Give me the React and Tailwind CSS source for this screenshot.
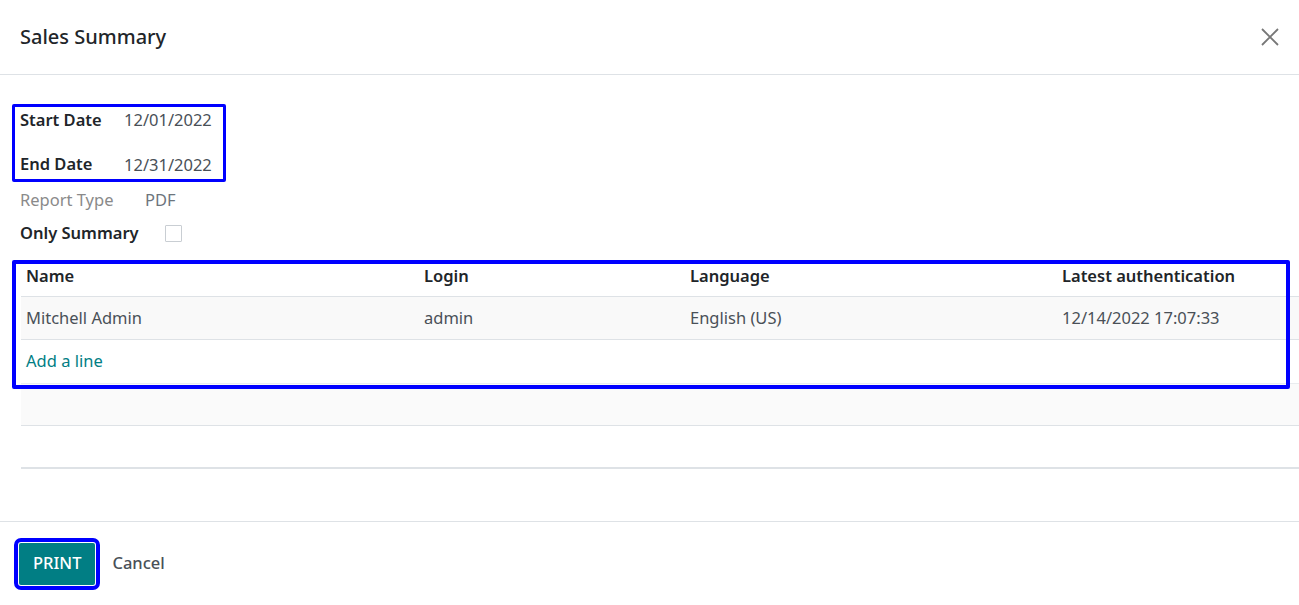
import React from 'react';

const cols = 'grid grid-cols-[397px_266px_372px_1fr]';

const App = () => {
  return (
    <div className="w-[1299px] h-[605px] bg-white flex flex-col text-[16.5px] text-[#212529] overflow-hidden font-['Noto_Sans','Open_Sans',sans-serif]">
      {/* header */}
      <div className="h-[75px] shrink-0 flex items-center justify-between pl-5 pr-[20px] border-b border-[#dee2e6]">
        <h4 className="text-[20px] font-medium">Sales Summary</h4>
        <svg width="20" height="20" viewBox="0 0 20 20" className="text-[#777] mr-[-1px]">
          <path d="M2 2 L18 18 M18 2 L2 18" stroke="currentColor" strokeWidth="1.8" fill="none" />
        </svg>
      </div>

      {/* body */}
      <div className="flex-1 pl-5 pt-[31px]">
        <div className="relative w-fit">
          <div className="flex items-center h-[29px]">
            <span className="w-[104px] font-semibold">Start Date</span>
            <span className="text-[#495057]">12/01/2022</span>
          </div>
          <div className="flex items-center h-[29px] mt-[15px]">
            <span className="w-[104px] font-semibold">End Date</span>
            <span className="text-[#495057] mt-[2px]">12/31/2022</span>
          </div>
          {/* highlight box */}
          <div className="absolute -left-[8px] top-[-2px] w-[214px] h-[78px] border-[3px] border-[#0000ff] rounded-[2px] pointer-events-none" />
        </div>
        <div className="flex items-center h-[29px] mt-[7px]">
          <span className="w-[125px] text-[#8a8a8a]">Report Type</span>
          <span className="text-[#6c757d]">PDF</span>
        </div>
        <div className="flex items-center h-[29px] mt-[4px]">
          <span className="w-[145px] font-semibold">Only Summary</span>
          <span className="w-[17px] h-[17px] border border-[#c9ced3] rounded-[1px] bg-white" />
        </div>

        {/* table */}
        <div className="mt-[11px] ml-px">
          <div className="relative">
            <div className={`${cols} h-[38px] items-center pb-[3px] font-semibold border-b border-[#dee2e6]`}>
              <div className="px-[5px]">Name</div>
              <div className="px-[6px]">Login</div>
              <div className="px-[6px]">Language</div>
              <div className="px-[6px]">Latest authentication</div>
            </div>
            <div className={`${cols} h-[43px] items-center bg-[#f9f9f9] border-b border-[#dee2e6] text-[#495057]`}>
              <div className="px-[5px]">Mitchell Admin</div>
              <div className="px-[6px]">admin</div>
              <div className="px-[6px]">English (US)</div>
              <div className="px-[6px]">12/14/2022 17:07:33</div>
            </div>
            <div className="h-[44px] flex items-center px-[5px] text-[#017e84] border-b border-[#e9ecef]">
              Add a line
            </div>
            {/* highlight box */}
            <div className="absolute -left-[9px] right-[9px] top-[1px] bottom-[-5px] border-4 border-[#0000ff] rounded-[2px] pointer-events-none" />
          </div>
          <div className="h-[42px] bg-[#fafafa] border-b border-[#dee2e6]" />
          <div className="h-[43px] border-b-2 border-[#dee2e6]" />
        </div>
      </div>

      {/* footer */}
      <div className="h-[84px] shrink-0 border-t border-[#dee2e6] flex items-center pl-[19px] gap-[17px]">
        <button className="h-[42px] px-[14px] bg-[#017e84] text-white font-medium outline-4 outline-[#0000ff] outline-offset-[1px] rounded-[2px]">
          PRINT
        </button>
        <button className="text-[#495057] font-medium">Cancel</button>
      </div>
    </div>
  );
};

export default App;
